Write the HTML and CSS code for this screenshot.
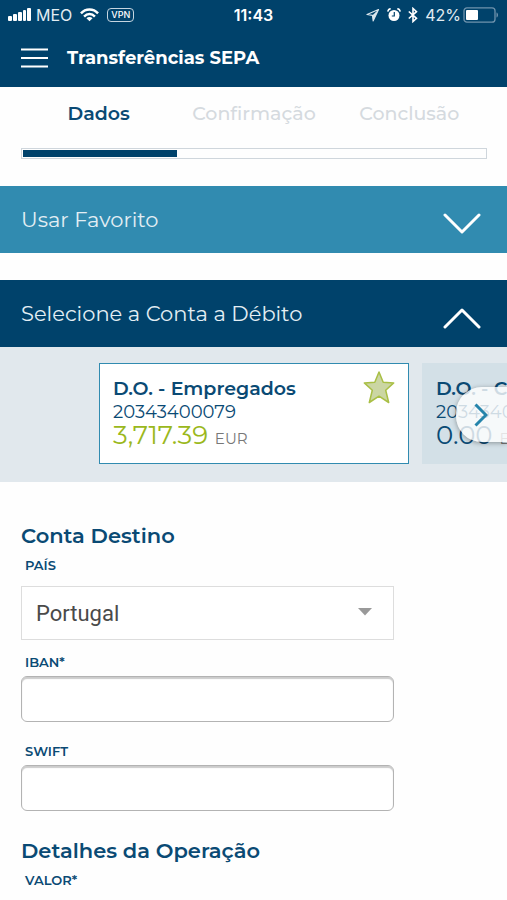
FILE: index.html
```html
<!DOCTYPE html>
<html lang="pt">
<head>
<meta charset="utf-8">
<meta name="viewport" content="width=device-width, initial-scale=1">
<title>Transferências SEPA</title>
<link rel="stylesheet" href="styles.css">
</head>
<body>
<header class="header">
  <div class="status">
    <div class="status-group status-left">
      <svg width="24" height="14" viewBox="0 0 24 14" fill="#fff" aria-hidden="true"><rect x="0" y="8" width="4" height="5" rx="1"/><rect x="5" y="6" width="4" height="7" rx="1"/><rect x="10" y="4" width="4" height="9" rx="1"/><rect x="15" y="2" width="3" height="11" rx="1"/><rect x="19" y="0" width="4" height="13" rx="1"/></svg>
      <span class="carrier">MEO</span>
      <svg class="wifi" width="19" height="14" viewBox="0 0 20 14" fill="none" stroke="#fff" stroke-width="2.6" aria-hidden="true"><path d="M1 5.2C6-.2 14-.2 19 5.2"/><path d="M4.300 8.600c3.300-3.400 8.100-3.400 11.400 0"/><path d="M10 13.500 6.800 10.500c1.800-1.700 4.600-1.700 6.400 0z" fill="#fff" stroke="none"/></svg>
      <span class="vpn">VPN</span>
    </div>
    <span class="clock">11:43</span>
    <div class="status-group status-right">
      <svg width="14" height="14" viewBox="0 0 14 14" aria-hidden="true"><path d="M12.500 1.500 1 6.500l5.500.8.700 5.500z" fill="none" stroke="#dce7ee" stroke-width="1.200" stroke-linejoin="round"/><path d="M12.500 1.500 6.500 7.300l.7 5.500z" fill="#dce7ee"/></svg>
      <svg width="14" height="14" viewBox="0 0 14 14" aria-hidden="true"><circle cx="7" cy="7.500" r="5.500" fill="#fff"/><path d="M.8 3.700C1 2 2 1 3.700.8M13.200 3.700C13 2 12 1 10.300.8" fill="none" stroke="#fff" stroke-width="1.500"/><path d="M7.300 4v4H4.800" fill="none" stroke="#00426b" stroke-width="1.200"/></svg>
      <svg width="10" height="16" viewBox="0 0 10 16" fill="none" stroke="#fff" stroke-width="1.600" aria-hidden="true"><path d="M.8 4.500 8.500 11.300 5 14.500v-13l3.500 3.200L.8 11.500"/></svg>
      <span class="charge">42%</span>
      <svg width="36" height="16" viewBox="0 0 36 16" aria-hidden="true"><rect x="1" y=".8" width="31" height="14.400" rx="3" fill="none" stroke="#6f93ad" stroke-width="1.300"/><rect x="3" y="3" width="12" height="10" rx="1" fill="#fff"/><path d="M33.500 5.500c2 .6 2 4.400 0 5z" fill="#6f93ad"/></svg>
    </div>
  </div>
  <div class="titlebar">
    <button class="menu" type="button" aria-label="Menu">
      <svg width="27" height="20" viewBox="0 0 27 20" stroke="#fff" stroke-width="2.200" aria-hidden="true"><path d="M0 1.500h27M0 10h27M0 18.500h27"/></svg>
    </button>
    <h1 class="title">Transferências SEPA</h1>
  </div>
</header>
<main>
  <section class="progress">
    <ol class="steps">
      <li class="step current" aria-current="step">Dados</li>
      <li class="step">Confirmação</li>
      <li class="step">Conclusão</li>
    </ol>
    <div class="track"><div class="fill"></div></div>
  </section>
  <button class="bar bar-favourite" type="button" aria-expanded="false">
    <span>Usar Favorito</span>
    <svg width="38" height="22" viewBox="0 0 38 22" fill="none" stroke="#fff" stroke-width="3" stroke-linecap="round" stroke-linejoin="round" aria-hidden="true"><path d="M2 2l17 17L36 2"/></svg>
  </button>
  <button class="bar bar-account" type="button" aria-expanded="true">
    <span>Selecione a Conta a Débito</span>
    <svg width="38" height="22" viewBox="0 0 38 22" fill="none" stroke="#fff" stroke-width="3" stroke-linecap="round" stroke-linejoin="round" aria-hidden="true"><path d="M2 20 19 3l17 17"/></svg>
  </button>
  <section class="carousel">
    <article class="card selected">
      <h2 class="name">D.O. - Empregados</h2>
      <p class="number">20343400079</p>
      <p class="balance">3,717.39 <span class="currency">EUR</span></p>
      <svg class="star" width="32" height="34" viewBox="0 0 32 34" aria-hidden="true"><path d="M16 2l4.200 10.300 10.500.6-8 7.400 3 12.200L16 26.200 6.300 32.500l3-12.200-8-7.400 10.500-.6z" fill="#cbd6a3" stroke="#a9bf45" stroke-width="1.500" stroke-linejoin="round"/></svg>
    </article>
    <article class="card">
      <h2 class="name">D.O. - Cliente</h2>
      <p class="number">20343400087</p>
      <p class="balance">0.00 <span class="currency">EUR</span></p>
    </article>
    <button class="next" type="button" aria-label="Conta seguinte">
      <svg width="14" height="24" viewBox="0 0 14 24" fill="none" stroke="#2584ab" stroke-width="3" aria-hidden="true"><path d="M1.500 1.500 12 12 1.500 22.500"/></svg>
    </button>
  </section>
  <form class="form">
    <h2 class="heading">Conta Destino</h2>
    <label class="label" for="pais">PAÍS</label>
    <div class="select-wrap">
      <select class="select" id="pais"><option>Portugal</option></select>
      <svg class="caret" width="14" height="8" viewBox="0 0 14 8" aria-hidden="true"><path d="M0 0h14L7 7.500z" fill="#999"/></svg>
    </div>
    <label class="label" for="iban">IBAN*</label>
    <input class="input" id="iban" type="text">
    <label class="label" for="swift">SWIFT</label>
    <input class="input" id="swift" type="text">
    <h2 class="heading">Detalhes da Operação</h2>
    <p class="label">VALOR*</p>
  </form>
</main>
</body>
</html>
```
FILE: styles.css
```css
* { box-sizing: border-box; }
body {
  margin: 0;
  background: #fefefe;
  color: #0a4a74;
  font-family: Montserrat, Inter, "Open Sans", sans-serif;
}
h1, h2, p, ol { margin: 0; padding: 0; }
button { border: 0; font: inherit; cursor: pointer; }
svg { display: block; flex: none; }

.header { background: #00426b; color: #fff; height: 87px; }
.status {
  display: grid;
  grid-template-columns: 1fr auto 1fr;
  align-items: center;
  height: 30px;
  padding: 0 8px;
  font-family: Inter, sans-serif;
  font-size: 16px;
}
.status-group { display: flex; align-items: center; }
.status-left { gap: 4px; }
.status-right { gap: 7px; justify-content: flex-end; }
.carrier, .charge { color: #e3ecf2; }
.wifi { margin: 0 4px; }
.vpn {
  border: 1px solid #c5d5e0;
  border-radius: 4px;
  padding: 0 3px;
  font-size: 9px;
  font-weight: 500;
  line-height: 12px;
}
.clock { font-weight: 600; }
.charge { margin-right: -5px; }
.titlebar { display: flex; align-items: center; gap: 19px; height: 56px; padding-left: 21px; }
.menu { padding: 0; background: none; }
.title { font-size: 18px; font-weight: 700; line-height: 24px; }

.progress { padding: 15px 20px 27px 21px; }
.steps { display: grid; grid-template-columns: repeat(3, 1fr); list-style: none; }
.step { color: #d5dadf; font-size: 19px; font-weight: 500; line-height: 24px; text-align: center; }
.current { color: #0a4a74; font-weight: 600; }
.track { height: 11px; margin-top: 22px; border: 1px solid #cfd6dc; padding: 1px; }
.fill { width: 33.33%; height: 7px; background: #00426b; }

.bar {
  display: flex;
  align-items: center;
  justify-content: space-between;
  width: 100%;
  height: 67px;
  padding: 0 26px 0 21px;
  color: #e3eef4;
  font-size: 21px;
  text-align: left;
}
.bar svg { margin-top: 8px; }
.bar-favourite { background: #318bb0; margin-bottom: 27px; }
.bar-account { background: #00426b; }

.carousel {
  position: relative;
  display: flex;
  gap: 13px;
  height: 135px;
  padding: 16px 0 18px 99px;
  overflow: hidden;
  background: #e1e8ed;
}
.card {
  position: relative;
  flex: 0 0 310px;
  padding: 13px;
  border: 1px solid transparent;
  background: #d3e0e7;
}
.selected { background: #fff; border-color: #318bb0; }
.name { font-size: 19px; font-weight: 600; line-height: 24px; }
.number { font-size: 18px; line-height: 22px; }
.balance { font-size: 26px; line-height: 24px; }
.selected .balance { color: #9bb81c; }
.currency { color: #777; font-size: 15px; }
.star { position: absolute; top: 6px; right: 13px; }
.next {
  position: absolute;
  top: 40px;
  right: 0;
  display: flex;
  align-items: center;
  width: 51px;
  height: 55px;
  padding: 0 0 0 18px;
  border-radius: 26px 0 0 26px;
  background: rgba(255, 255, 255, 0.8);
  box-shadow: 0 1px 5px rgba(0, 0, 0, 0.35);
}

.form { padding: 41px 20px 8px 21px; }
.heading { font-size: 21px; font-weight: 600; line-height: 26px; }
.label { display: block; padding-left: 4px; font-size: 13px; font-weight: 600; line-height: 16px; }
.heading + .label { margin-top: 8px; }
.select-wrap { position: relative; width: 80%; margin: 13px 0 14px; }
.select {
  appearance: none;
  display: block;
  width: 100%;
  height: 54px;
  padding: 0 14px;
  border: 1px solid #ddd;
  border-radius: 0;
  background: #fff;
  color: #4a4a4a;
  font-family: Roboto, sans-serif;
  font-size: 22px;
}
.caret { position: absolute; top: 22px; right: 22px; pointer-events: none; }
.input {
  display: block;
  width: 80%;
  height: 46px;
  margin: 6px 0 21px;
  padding: 0 14px;
  border: 1px solid #b3b3b3;
  border-radius: 6px;
  background: #fff;
  box-shadow: inset 0 2px 1px #ccc;
  font-size: 20px;
}
.input + .heading { margin-top: 27px; }
```
